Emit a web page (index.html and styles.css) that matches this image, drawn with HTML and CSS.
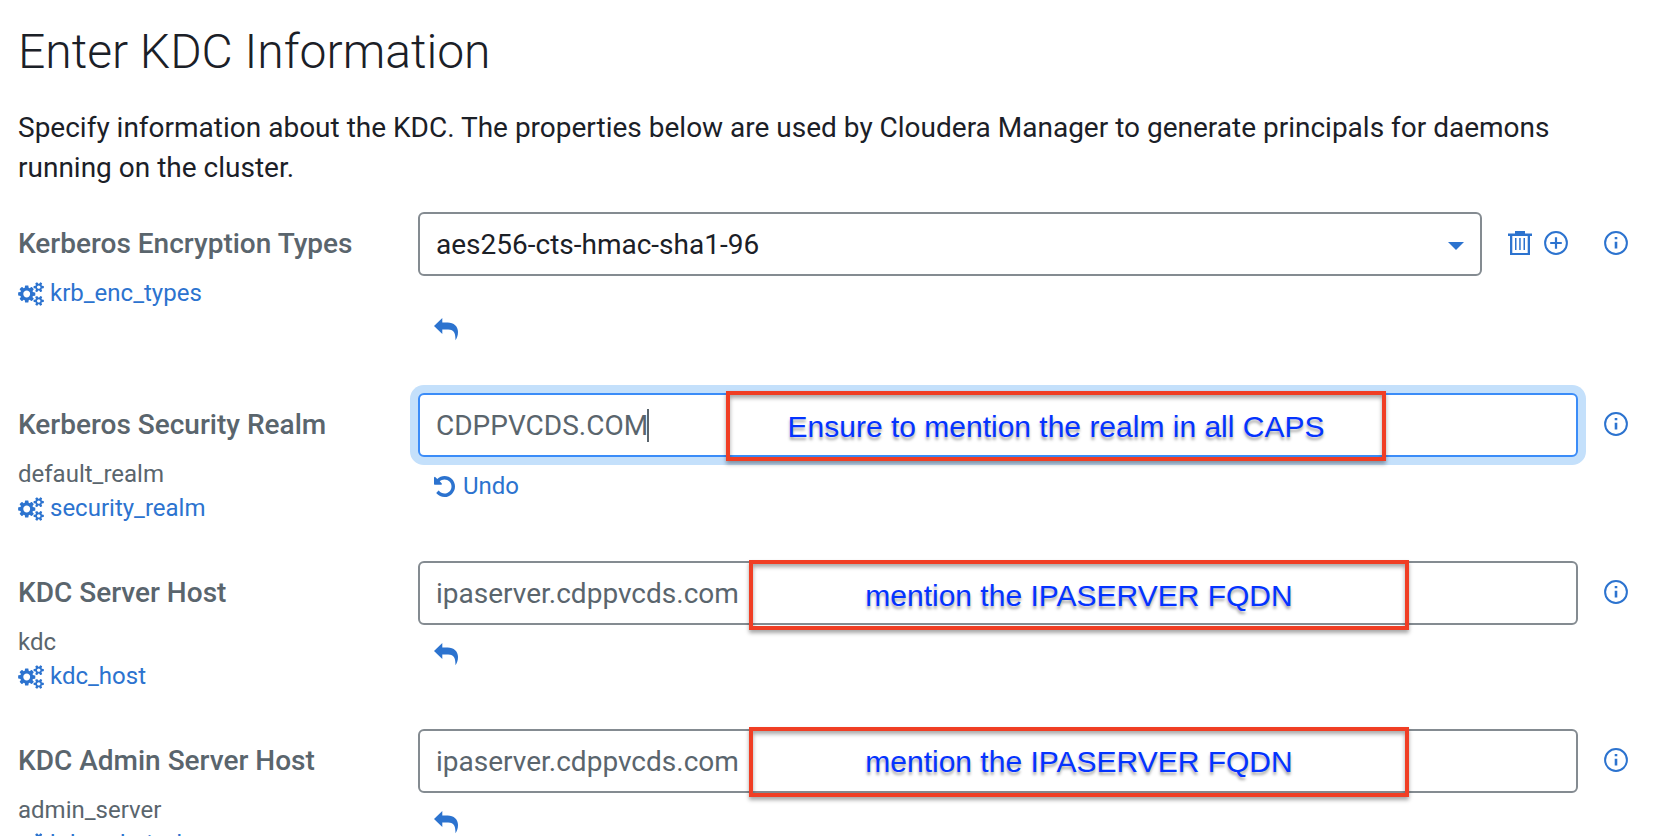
FILE: index.html
```html
<!DOCTYPE html>
<html lang="en">
<head>
<meta charset="utf-8">
<title>Enter KDC Information</title>
<link rel="stylesheet" href="styles.css">
</head>
<body>
<svg class="sprite" aria-hidden="true">
  <symbol id="cogs" viewBox="0 0 1920 1792"><path d="M896 896q0-106-75-181t-181-75-181 75-75 181 75 181 181 75 181-75 75-181zm768 512q0-52-38-90t-90-38-90 38-38 90q0 53 37.5 90.5t90.5 37.5 90.5-37.5 37.5-90.5zm0-1024q0-52-38-90t-90-38-90 38-38 90q0 53 37.5 90.5t90.5 37.5 90.5-37.5 37.5-90.5zm-384 421v185q0 10-7 19.5t-16 10.5l-155 24q-11 35-32 76 34 48 90 115 7 11 7 20 0 12-7 19-23 30-82.5 89.5t-78.5 59.5q-11 0-21-7l-115-90q-37 19-77 31-11 108-23 155-7 24-30 24h-186q-11 0-20-7.5t-10-17.5l-23-153q-34-10-75-31l-118 89q-7 7-20 7-11 0-21-8-144-133-144-160 0-9 7-19 10-14 41-53t47-61q-23-44-35-82l-152-24q-10-1-17-9.5t-7-19.5v-185q0-10 7-19.5t16-10.5l155-24q11-35 32-76-34-48-90-115-7-11-7-20 0-12 7-20 22-30 82-89t79-59q11 0 21 7l115 90q34-18 77-32 11-108 23-154 7-24 30-24h186q11 0 20 7.5t10 17.5l23 153q34 10 75 31l118-89q8-7 20-7 11 0 21 8 144 133 144 160 0 8-7 19-12 16-42 54t-45 60q23 48 34 82l152 23q10 2 17 10.5t7 19.5zm640 533v140q0 16-149 31-12 27-30 52 51 113 51 138 0 4-4 7-122 71-124 71-8 0-46-47t-52-68q-20 2-30 2t-30-2q-14 21-52 68t-46 47q-2 0-124-71-4-3-4-7 0-25 51-138-18-25-30-52-149-15-149-31v-140q0-16 149-31 13-29 30-52-51-113-51-138 0-4 4-7 4-2 35-20t59-34 30-16q8 0 46 46.5t52 67.5q20-2 30-2t30 2q51-71 92-112l6-2q4 0 124 70 4 3 4 7 0 25-51 138 17 23 30 52 149 15 149 31zm0-1024v140q0 16-149 31-12 27-30 52 51 113 51 138 0 4-4 7-122 71-124 71-8 0-46-47t-52-68q-20 2-30 2t-30-2q-14 21-52 68t-46 47q-2 0-124-71-4-3-4-7 0-25 51-138-18-25-30-52-149-15-149-31v-140q0-16 149-31 13-29 30-52-51-113-51-138 0-4 4-7 4-2 35-20t59-34 30-16q8 0 46 46.5t52 67.5q20-2 30-2t30 2q51-71 92-112l6-2q4 0 124 70 4 3 4 7 0 25-51 138 17 23 30 52 149 15 149 31z"/></symbol>
  <symbol id="reply" viewBox="0 0 24 23"><path d="M0 8 8.3 0v4.5h5.2C20 4.5 24 8.500 24 14c0 3.500-1 6-2.500 8.300C21.500 16 20.500 11.500 14 11.500H8.300V16z"/></symbol>
  <symbol id="undo" viewBox="128 128 1536 1536"><path d="M1664 896q0 156-61 298t-164 245-245 164-298 61q-172 0-327-72.500t-264-204.500q-7-10-6.500-22.500t8.500-20.500l137-138q10-9 25-9 16 2 23 12 73 95 179 147t225 52q104 0 198.500-40.500t163.500-109.500 109.500-163.500 40.500-198.500-40.500-198.500-109.500-163.500-163.500-109.500-198.500-40.500q-98 0-188 35.500t-160 101.500l137 138q31 30 14 69-17 40-59 40h-448q-26 0-45-19t-19-45v-448q0-42 40-59 39-17 69 14l130 129q107-101 244.500-156.500t284.500-55.500q156 0 298 61t245 164 164 245 61 298z"/></symbol>
  <symbol id="info" viewBox="0 0 24 24"><circle cx="12" cy="12" r="10.900" fill="none" stroke="currentColor" stroke-width="2"/><path d="M10.700 6h2.600v2.300h-2.600zM10.700 10.700h2.600V17.600h-2.600z"/></symbol>
  <symbol id="plus" viewBox="0 0 24 24"><circle cx="12" cy="12" r="10.900" fill="none" stroke="currentColor" stroke-width="2"/><path d="M10.900 6.200h2.200v4.700h4.700v2.200h-4.700v4.700h-2.200v-4.700H6.200v-2.200h4.700z"/></symbol>
  <symbol id="trash" viewBox="0 0 24 24"><path d="M7 0h10v2.500h7V5h-2v19H2V5H0V2.500h7zM4.300 5v17h15.400V5zM7 7h1.500v12H7zM11.200 7h1.500v12h-1.500zM15.500 7H17v12h-1.500z" fill-rule="evenodd"/></symbol>
</svg>

<main class="page">
  <h1 class="title">Enter KDC Information</h1>
  <p class="intro">Specify information about the KDC. The properties below are used by Cloudera Manager to generate principals for daemons running on the cluster.</p>

  <form class="fields">
    <div class="row">
      <div class="meta">
        <label class="name" for="enc">Kerberos Encryption Types</label>
        <a class="prop" href="#krb_enc_types"><svg class="cogs"><use href="#cogs"/></svg>krb_enc_types</a>
      </div>
      <div class="control">
        <div class="line">
          <div class="box">
            <select class="field field-select" id="enc"><option>aes256-cts-hmac-sha1-96</option></select>
            <svg class="arrow" viewBox="0 0 16 8"><path d="M0 0h16L8 8z"/></svg>
          </div>
          <div class="actions">
            <button class="icon-button" type="button" aria-label="Delete"><svg class="icon"><use href="#trash"/></svg></button>
            <button class="icon-button" type="button" aria-label="Add"><svg class="icon"><use href="#plus"/></svg></button>
          </div>
        </div>
        <button class="revert revert-list" type="button" aria-label="Reset to default"><svg class="reply"><use href="#reply"/></svg></button>
      </div>
      <button class="icon-button help" type="button" aria-label="Help"><svg class="icon"><use href="#info"/></svg></button>
    </div>

    <div class="row">
      <div class="meta">
        <label class="name" for="realm">Kerberos Security Realm</label>
        <span class="key">default_realm</span>
        <a class="prop" href="#security_realm"><svg class="cogs"><use href="#cogs"/></svg>security_realm</a>
      </div>
      <div class="control">
        <div class="box">
          <input class="field field-active" id="realm" type="text" value="CDPPVCDS.COM">
          <span class="cursor"></span>
          <div class="note note-realm">Ensure to mention the realm in all CAPS</div>
        </div>
        <button class="revert" type="button"><svg class="undo"><use href="#undo"/></svg>Undo</button>
      </div>
      <button class="icon-button help" type="button" aria-label="Help"><svg class="icon"><use href="#info"/></svg></button>
    </div>

    <div class="row">
      <div class="meta">
        <label class="name" for="kdc">KDC Server Host</label>
        <span class="key">kdc</span>
        <a class="prop" href="#kdc_host"><svg class="cogs"><use href="#cogs"/></svg>kdc_host</a>
      </div>
      <div class="control">
        <div class="box">
          <input class="field" id="kdc" type="text" value="ipaserver.cdppvcds.com">
          <div class="note note-kdc">mention the IPASERVER FQDN</div>
        </div>
        <button class="revert" type="button" aria-label="Reset to default"><svg class="reply"><use href="#reply"/></svg></button>
      </div>
      <button class="icon-button help" type="button" aria-label="Help"><svg class="icon"><use href="#info"/></svg></button>
    </div>

    <div class="row">
      <div class="meta">
        <label class="name" for="admin">KDC Admin Server Host</label>
        <span class="key">admin_server</span>
        <a class="prop" href="#kdc_admin_host"><svg class="cogs"><use href="#cogs"/></svg>kdc_admin_host</a>
      </div>
      <div class="control">
        <div class="box">
          <input class="field" id="admin" type="text" value="ipaserver.cdppvcds.com">
          <div class="note">mention the IPASERVER FQDN</div>
        </div>
        <button class="revert" type="button" aria-label="Reset to default"><svg class="reply"><use href="#reply"/></svg></button>
      </div>
      <button class="icon-button help" type="button" aria-label="Help"><svg class="icon"><use href="#info"/></svg></button>
    </div>
  </form>
</main>
</body>
</html>
```
FILE: styles.css
```css
* { box-sizing: border-box; }

html { overflow: hidden; }

body {
  margin: 0;
  background: #fff;
  color: #1b2027;
  font-family: Roboto, "Liberation Sans", sans-serif;
  font-size: 28px;
  line-height: 40px;
}

.sprite { display: none; }

svg { fill: currentColor; flex: none; display: block; }

.page { padding: 24px 30px 24px 18px; }

.title {
  margin: 0 0 28px;
  font-size: 48px;
  font-weight: 300;
  line-height: 56px;
}

.intro { margin: 0 0 24px; }

.fields { display: flex; flex-direction: column; gap: 35px; }

.row {
  display: grid;
  grid-template-columns: 400px minmax(0, 1fr) 50px;
}

.meta {
  display: flex;
  flex-direction: column;
  align-items: flex-start;
  padding-top: 12px;
  font-size: 24px;
  line-height: 34px;
  color: #5a656d;
}

.name {
  margin-bottom: 12px;
  font-size: 28px;
  font-weight: 500;
  line-height: 40px;
}

.prop {
  display: flex;
  align-items: center;
  gap: 6px;
  line-height: 35px;
  color: #2c73cf;
  text-decoration: none;
}

.cogs { width: 26px; height: 24px; }

.control {
  display: flex;
  flex-direction: column;
}

.line { display: flex; }

.box { position: relative; }

.line .box { flex: 1; }

.field {
  display: block;
  width: 100%;
  height: 64px;
  padding: 0 16px;
  border: 2px solid #848b91;
  border-radius: 6px;
  background: #fff;
  color: #5a656d;
  font: inherit;
  outline: none;
}

.field-select { appearance: none; padding-top: 2px; color: #1b2027; }

.field-active {
  border-color: #3b8cf8;
  box-shadow: 0 0 0 8px #c4e0fb;
}

.arrow {
  position: absolute;
  right: 18px;
  top: 30px;
  width: 16px;
  height: 8px;
  color: #2c73cf;
  pointer-events: none;
}

.cursor {
  position: absolute;
  left: 229px;
  top: 16px;
  width: 2px;
  height: 33px;
  background: #5a656d;
}

.actions { display: flex; gap: 12px; padding: 19px 10px 0 26px; }

.icon-button {
  display: block;
  width: 24px;
  height: 24px;
  padding: 0;
  border: 0;
  background: none;
  color: #2c73cf;
}

.icon { width: 24px; height: 24px; }

.help { margin: 19px 0 0 26px; }

.revert {
  display: flex;
  align-items: center;
  align-self: flex-start;
  gap: 8px;
  height: 34px;
  margin: 12px 0 0 16px;
  padding: 0;
  border: 0;
  background: none;
  color: #2c73cf;
  font: inherit;
  font-size: 24px;
  line-height: 34px;
}

.revert-list { margin-top: 36px; margin-bottom: 12px; }

.reply { width: 24px; height: 23px; }

.undo { width: 21px; height: 21px; }

.note {
  position: absolute;
  left: 331px;
  top: -2px;
  display: flex;
  align-items: center;
  justify-content: center;
  width: 660px;
  height: 70px;
  border: 4px solid #f03e24;
  box-shadow: 0 3px 4px rgba(0, 0, 0, 0.35), inset 0 3px 4px rgba(0, 0, 0, 0.35);
  color: #0433ff;
  font-family: "Liberation Sans", Arial, sans-serif;
  font-size: 30px;
  text-shadow: 0 3px 3px rgba(0, 0, 0, 0.35);
  white-space: nowrap;
}

.note-realm { left: 308px; padding-top: 2px; }

.note-kdc { top: -1px; padding-top: 2px; }
```
